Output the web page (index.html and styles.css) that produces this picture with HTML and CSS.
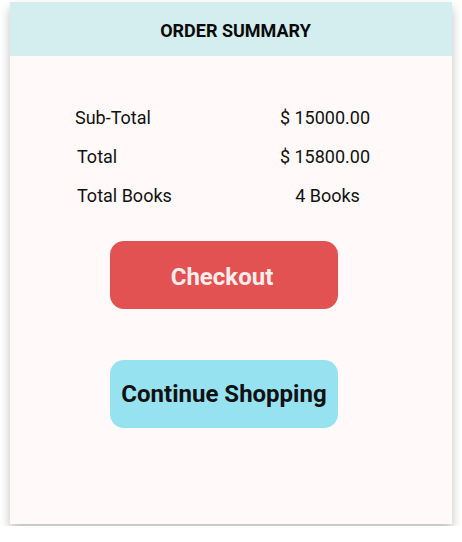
FILE: index.html
```html
<!DOCTYPE html>
<html>
<head>
<meta charset="utf-8">
<link rel="stylesheet" href="styles.css">
</head>
<body>
<div class="card">
  <div class="card-header">ORDER SUMMARY</div>
  <div class="card-body">
    <div class="summary">
      <span class="label l1">Sub-Total</span><span class="value">$ 15000.00</span>
      <span class="label">Total</span><span class="value">$ 15800.00</span>
      <span class="label">Total Books</span><span class="value v3">4 Books</span>
    </div>
    <button class="btn btn-checkout">Checkout</button>
    <button class="btn btn-continue">Continue Shopping</button>
  </div>
</div>
</body>
</html>
```
FILE: styles.css
```css
html, body {
  margin: 0;
  padding: 0;
  background: #ffffff;
  font-family: Roboto, "Liberation Sans", sans-serif;
}
.card {
  margin: 2px 10px;
  width: 442px;
  height: 522px;
  background: #fffaf9;
  box-shadow: 0 6px 10px rgba(0,0,0,0.25);
  display: flex;
  flex-direction: column;
}
.card-header {
  height: 54px;
  box-sizing: border-box;
  padding: 3px 0 0 9px;
  background: #d4eef0;
  display: flex;
  align-items: center;
  justify-content: center;
  font-weight: 700;
  font-size: 18px;
  color: #0a0a0a;
}
.card-body {
  display: flex;
  flex-direction: column;
  align-items: flex-start;
  padding-top: 42px;
}
.summary {
  display: grid;
  grid-template-columns: 160px 180px;
  grid-auto-rows: 39px;
  align-items: center;
  margin-left: 65px;
  font-size: 18px;
  color: #111;
}
.label {
  padding-left: 2px;
}
.label.l1 {
  padding-left: 0;
}
.value {
  text-align: center;
}
.value.v3 {
  padding-left: 5px;
}
.btn {
  width: 228px;
  height: 68px;
  margin-left: 100px;
  border: none;
  border-radius: 14px;
  font-family: Roboto, "Liberation Sans", sans-serif;
  font-weight: 700;
  font-size: 24px;
  padding: 0;
}
.btn-checkout {
  margin-top: 26px;
  padding: 3px 4px 0 0;
  background: #e35252;
  color: #fcecec;
}
.btn-continue {
  margin-top: 51px;
  background: #97e2f1;
  color: #111;
}
```
